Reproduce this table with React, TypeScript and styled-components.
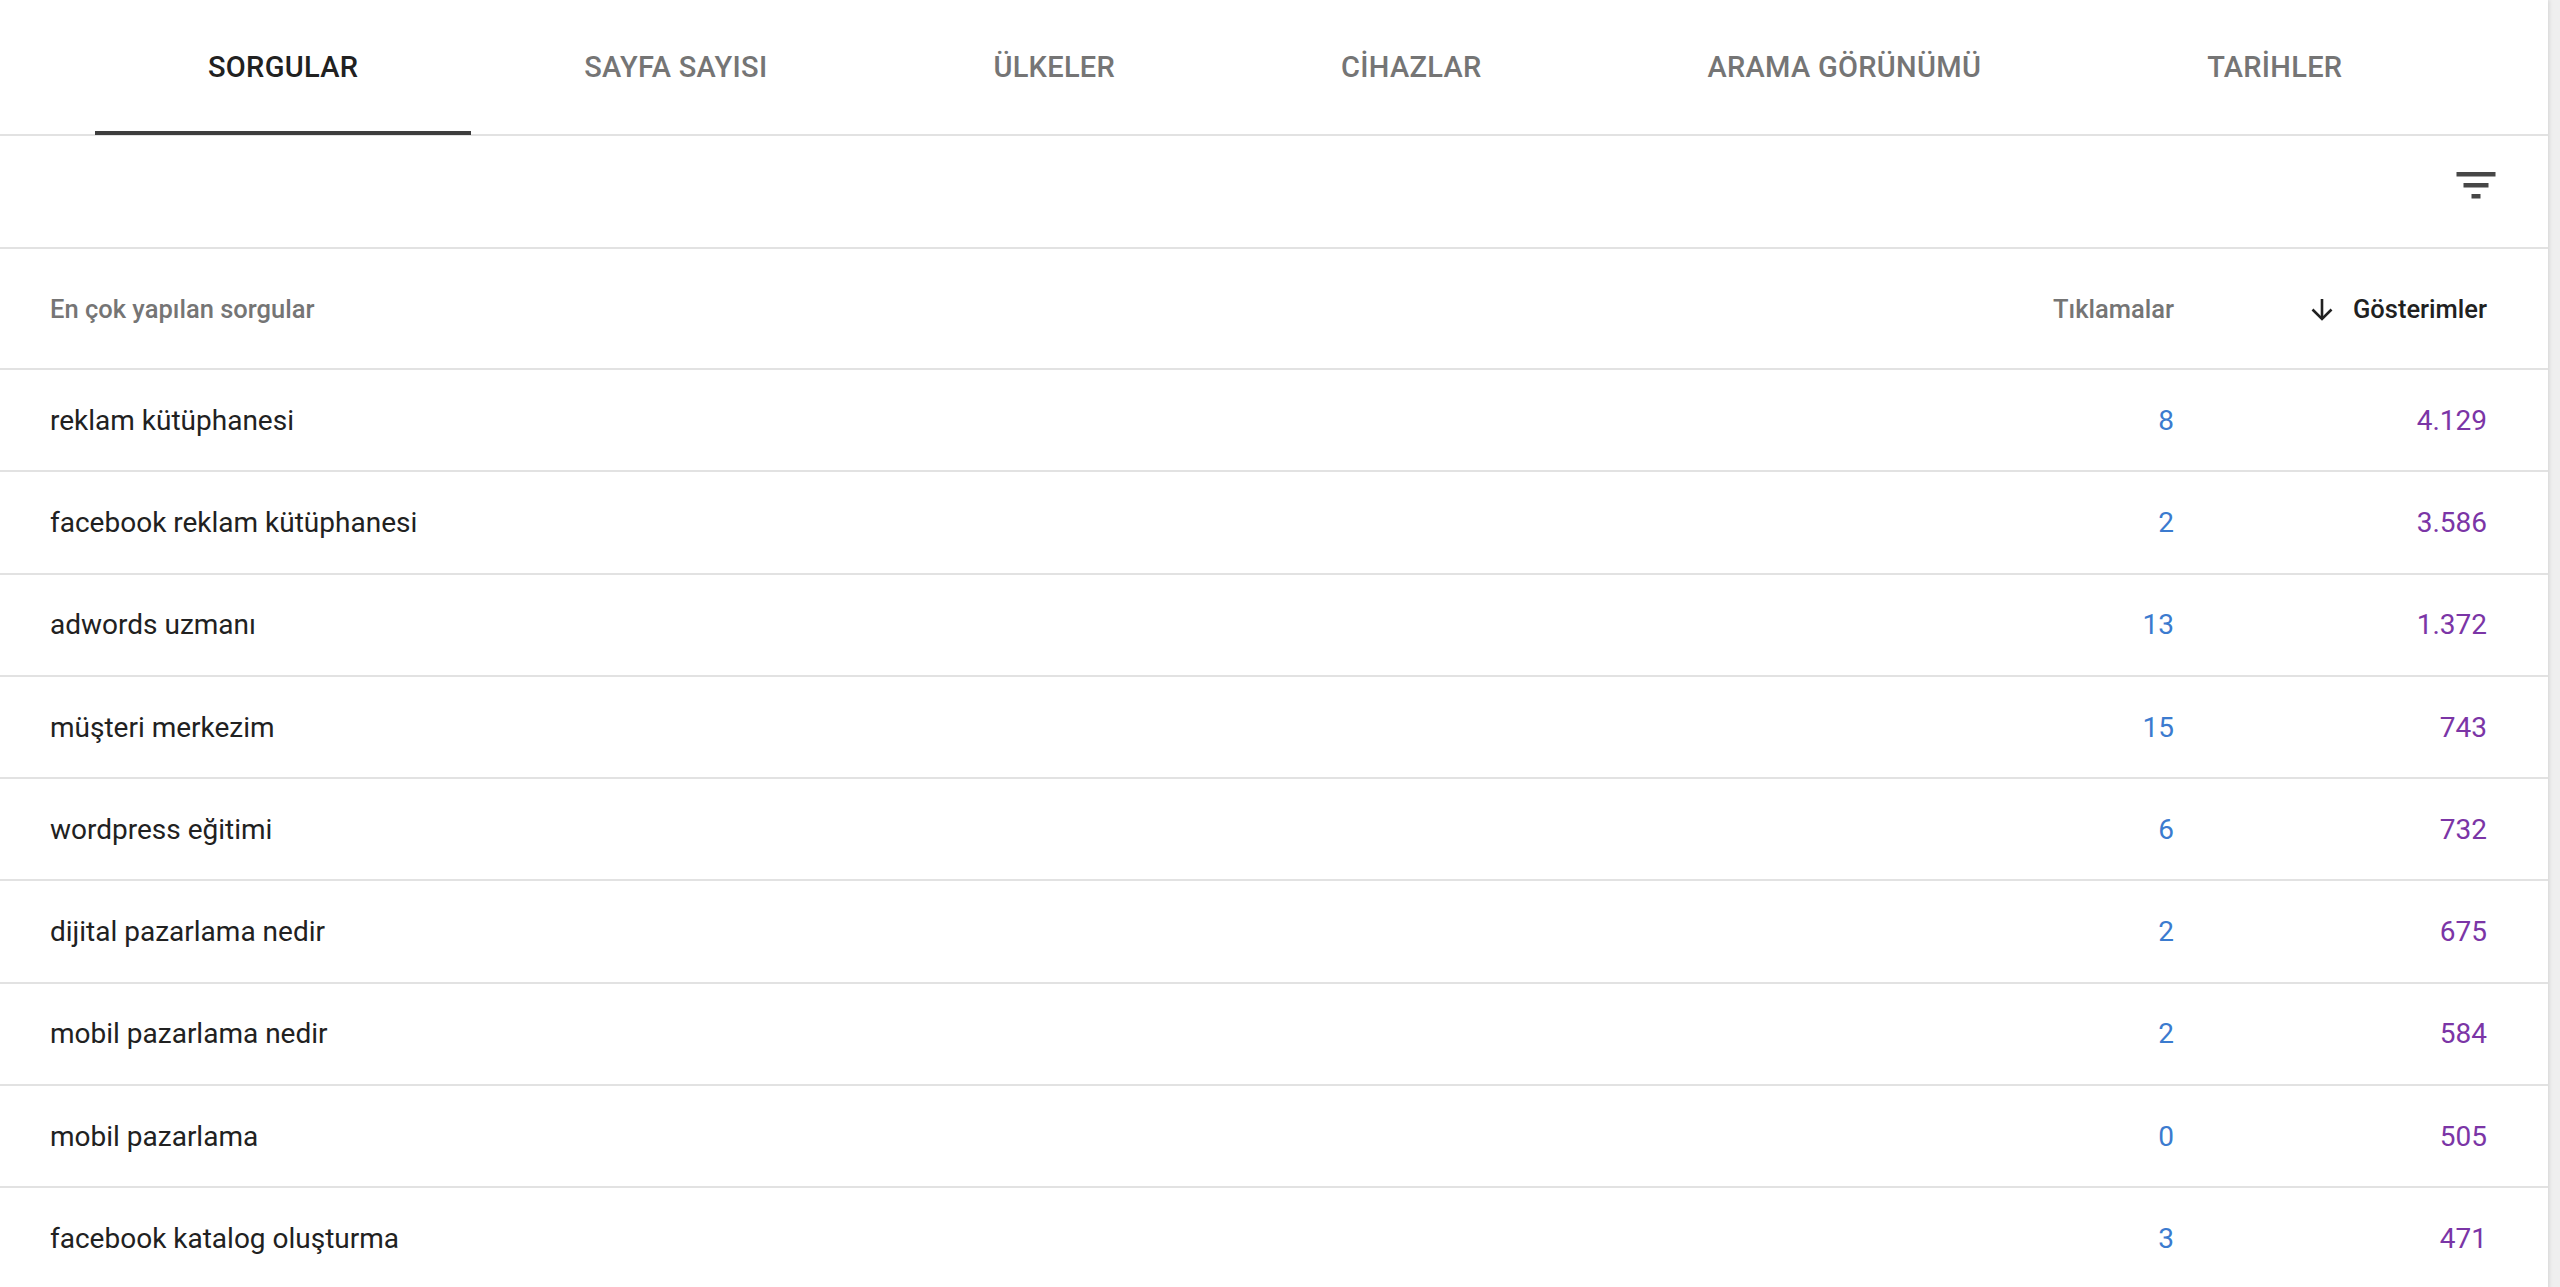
import styled, { createGlobalStyle } from "styled-components";

type QueryRow = {
  query: string;
  clicks: string;
  impressions: string;
};

const rows: QueryRow[] = [
  { query: "reklam kütüphanesi", clicks: "8", impressions: "4.129" },
  { query: "facebook reklam kütüphanesi", clicks: "2", impressions: "3.586" },
  { query: "adwords uzmanı", clicks: "13", impressions: "1.372" },
  { query: "müşteri merkezim", clicks: "15", impressions: "743" },
  { query: "wordpress eğitimi", clicks: "6", impressions: "732" },
  { query: "dijital pazarlama nedir", clicks: "2", impressions: "675" },
  { query: "mobil pazarlama nedir", clicks: "2", impressions: "584" },
  { query: "mobil pazarlama", clicks: "0", impressions: "505" },
  { query: "facebook katalog oluşturma", clicks: "3", impressions: "471" },
];

const tabs = ["SORGULAR", "SAYFA SAYISI", "ÜLKELER", "CİHAZLAR", "ARAMA GÖRÜNÜMÜ", "TARİHLER"];

function FilterIcon() {
  return (
    <svg width="40" height="30" viewBox="0 0 40 30" fill="#474747">
      <rect x="0.5" y="2" width="39" height="4.5" />
      <rect x="7.5" y="13" width="25" height="4.5" />
      <rect x="15.5" y="24" width="9" height="4.5" />
    </svg>
  );
}

function ArrowDown() {
  return (
    <svg width="24" height="24" viewBox="0 0 24 24" fill="none" stroke="#212121" strokeWidth="2.6">
      <path d="M12 2v20" />
      <path d="M2.5 12.5 12 22l9.5-9.5" />
    </svg>
  );
}

function App() {
  return (
    <>
      <GlobalStyle />
      <Card>
        <TabBar>
          {tabs.map((tab, i) => (
            <Tab key={tab} active={i === 0}>
              {tab}
            </Tab>
          ))}
        </TabBar>

        <Toolbar>
          <FilterIcon />
        </Toolbar>

        <HeaderRow>
          <QueryCell>En çok yapılan sorgular</QueryCell>
          <ClicksHead>Tıklamalar</ClicksHead>
          <ImpressionsHead>
            <ArrowDown />
            <span>Gösterimler</span>
          </ImpressionsHead>
        </HeaderRow>

        {rows.map((row) => (
          <DataRow key={row.query}>
            <QueryCell>{row.query}</QueryCell>
            <ClicksCell>{row.clicks}</ClicksCell>
            <ImpressionsCell>{row.impressions}</ImpressionsCell>
          </DataRow>
        ))}
      </Card>
    </>
  );
}

const GlobalStyle = createGlobalStyle`
  html, body {
    margin: 0;
    padding: 0;
    overflow: hidden;
    background: #efefef;
    font-family: Roboto, "Noto Sans", sans-serif;
  }
`;

const Card = styled.main`
  width: 2548px;
  min-height: 1287px;
  background: #ffffff;
  box-shadow: 1px 0 4px rgba(0, 0, 0, 0.12);
`;

const TabBar = styled.nav`
  display: flex;
  height: 136px;
  padding-left: 95px;
  box-sizing: border-box;
  border-bottom: 2px solid #e2e2e2;
`;

const Tab = styled.div<{ active: boolean }>`
  display: flex;
  align-items: center;
  justify-content: center;
  padding: 3px 113px 0;
  box-sizing: border-box;
  height: 135px;
  font-size: 29px;
  font-weight: 500;
  letter-spacing: 0.01em;
  color: ${(props) => (props.active ? "#212121" : "#757575")};
  border-bottom: 4px solid ${(props) => (props.active ? "#3d3d3d" : "transparent")};
  cursor: pointer;
`;

const Toolbar = styled.div`
  display: flex;
  justify-content: flex-end;
  align-items: flex-start;
  height: 113px;
  box-sizing: border-box;
  padding: 34px 52px 0 0;
  border-bottom: 2px solid #e2e2e2;
`;

const HeaderRow = styled.div`
  display: flex;
  align-items: center;
  height: 121px;
  box-sizing: border-box;
  padding: 0 61px 0 50px;
  border-bottom: 2px solid #e2e2e2;
  font-size: 25.5px;
  font-weight: 500;
  color: #757575;
`;

const DataRow = styled.div`
  display: flex;
  align-items: center;
  height: 102.3px;
  box-sizing: border-box;
  padding: 0 61px 0 50px;
  border-bottom: 2px solid #e2e2e2;
  font-size: 28px;
  color: #212121;
`;

const QueryCell = styled.div`
  flex: 1;
`;

const ClicksCell = styled.div`
  width: 240px;
  text-align: right;
  color: #3b7bcf;
`;

const ClicksHead = styled(ClicksCell)`
  color: #757575;
`;

const ImpressionsCell = styled.div`
  width: 313px;
  text-align: right;
  color: #7b35a6;
`;

const ImpressionsHead = styled.div`
  width: 313px;
  display: flex;
  justify-content: flex-end;
  align-items: center;
  gap: 19px;
  color: #212121;
`;

export default App;
